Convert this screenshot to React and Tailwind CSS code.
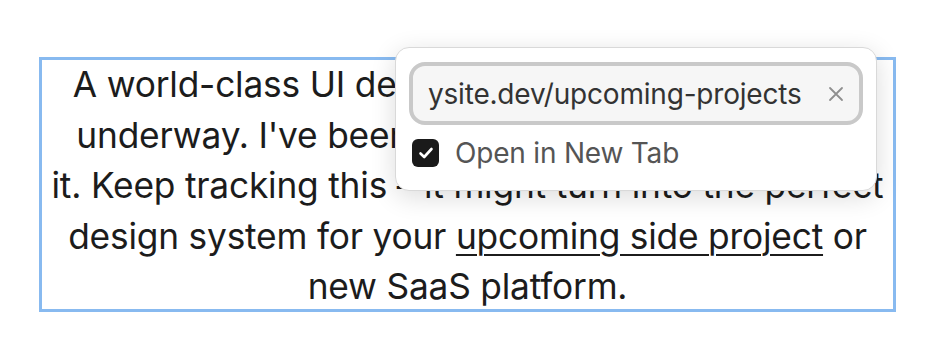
export default function App() {
  const line = "flex justify-center whitespace-nowrap h-[50.5px] items-center";
  return (
    <div className="relative w-[946px] h-[356px] bg-white" style={{ fontFamily: 'Inter, "Noto Sans", sans-serif' }}>
      <div className="absolute left-[39px] top-[57px] w-[857px] h-[255px] border-[3px] border-[#88baf0]">
        <div className="text-[35.3px] leading-[50px] text-[#1c1c1c] tracking-[-0.2px]">
          <div className={line}>A world-class UI design system is currently well</div>
          <div className={line}>underway. I've been thinking a great deal about</div>
          <div className={line}>it. Keep tracking this – it might turn into the perfect</div>
          <div className={line}>
            <span>design system for your&nbsp;</span>
            <span className="underline decoration-[2px] underline-offset-[5px]">upcoming side project</span>
            <span>&nbsp;or</span>
          </div>
          <div className={line}>new SaaS platform.</div>
        </div>
      </div>

      <div className="absolute left-[395px] top-[47px] w-[482px] h-[144px] rounded-[14px] border border-[#d9d9d9] bg-white shadow-[0_6px_26px_rgba(0,0,0,0.14)] px-[13px] pt-[14px]">
        <div className="flex items-center h-[63px] rounded-[16px] border-[4px] border-[#c9c9c9] bg-[#f6f6f6] pl-[15px] pr-[15px] overflow-hidden">
          <span className="flex-1 whitespace-nowrap overflow-hidden text-[28px] text-[#333333] tracking-[-0.2px]">ysite.dev/upcoming-projects</span>
          <svg width="16" height="16" viewBox="0 0 16 16" className="shrink-0">
            <path d="M2 2 L14 14 M14 2 L2 14" stroke="#8f8f8f" strokeWidth="1.8" strokeLinecap="round" />
          </svg>
        </div>
        <div className="flex items-center mt-[7px] pl-[3px] gap-[16px]">
          <div className="w-[27px] h-[28px] rounded-[6px] bg-[#1a1a1a] flex items-center justify-center">
            <svg width="16" height="14" viewBox="0 0 16 14">
              <path d="M2.5 7.5 L6.2 11 L13.5 3" fill="none" stroke="white" strokeWidth="2.6" strokeLinecap="round" strokeLinejoin="round" />
            </svg>
          </div>
          <span className="text-[28px] text-[#555555] tracking-[-0.2px]">Open in New Tab</span>
        </div>
      </div>
    </div>
  );
}
